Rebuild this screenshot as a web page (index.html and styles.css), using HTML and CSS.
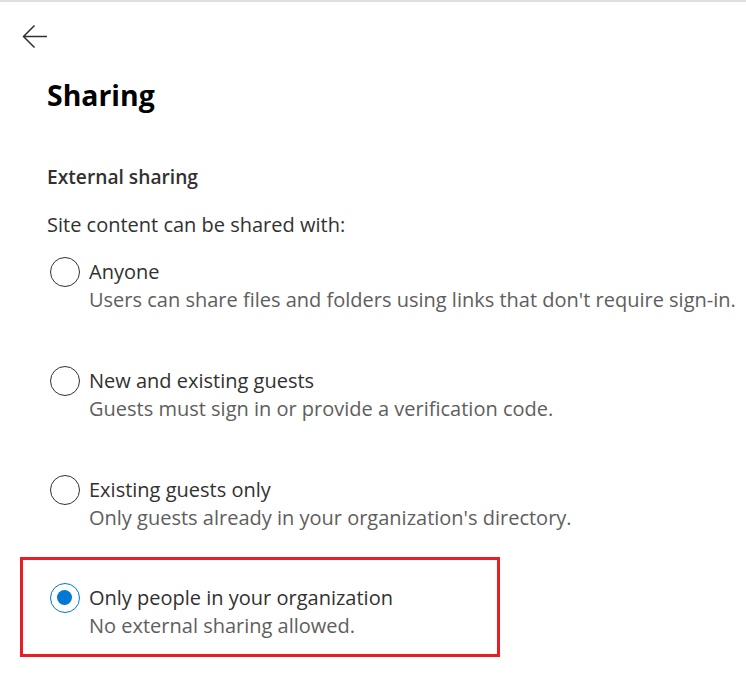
FILE: index.html
```html
<!DOCTYPE html>
<html>
<head>
<meta charset="utf-8">
<link rel="stylesheet" href="styles.css">
</head>
<body>
<div class="page">
  <button class="back" aria-label="Back">
    <svg width="26" height="26" viewBox="0 0 26 26"><path d="M25 12.5H1.5M12.5 1.5L1.5 12.5L12.5 23.5" fill="none" stroke="#323130" stroke-width="1.5"/></svg>
  </button>
  <div class="content">
    <h1 class="title">Sharing</h1>
    <h2 class="section">External sharing</h2>
    <p class="intro">Site content can be shared with:</p>
    <div class="options">
      <div class="option">
        <span class="radio"></span>
        <div class="text">
          <div class="label">Anyone</div>
          <div class="desc">Users can share files and folders using links that don't require sign-in.</div>
        </div>
      </div>
      <div class="option">
        <span class="radio"></span>
        <div class="text">
          <div class="label">New and existing guests</div>
          <div class="desc">Guests must sign in or provide a verification code.</div>
        </div>
      </div>
      <div class="option">
        <span class="radio"></span>
        <div class="text">
          <div class="label">Existing guests only</div>
          <div class="desc">Only guests already in your organization's directory.</div>
        </div>
      </div>
      <div class="highlight">
        <div class="option">
          <span class="radio checked"></span>
          <div class="text">
            <div class="label">Only people in your organization</div>
            <div class="desc">No external sharing allowed.</div>
          </div>
        </div>
      </div>
    </div>
  </div>
</div>
</body>
</html>
```
FILE: styles.css
```css
html, body {
  margin: 0;
  padding: 0;
  background: #fff;
}
body {
  font-family: "Open Sans", "Noto Sans", sans-serif;
  color: #323130;
  height: 680px;
  overflow: hidden;
}
.page {
  border-top: 2px solid #e1dfdd;
  padding-top: 22px;
}
.back {
  display: block;
  margin: 0 0 0 22px;
  padding: 0;
  border: 0;
  background: none;
  width: 26px;
  height: 26px;
}
.back svg { display: block; }
.content {
  padding-left: 47px;
}
.title {
  margin: 25px 0 0;
  font-size: 28.4px;
  line-height: 40px;
  font-weight: 700;
  color: #000;
}
.section {
  margin: 48px 0 0;
  font-size: 19.2px;
  line-height: 28px;
  font-weight: 600;
  color: #323130;
}
.intro {
  margin: 20px 0 0;
  font-size: 20px;
  line-height: 28px;
}
.options {
  margin-top: 19px;
  display: flex;
  flex-direction: column;
  gap: 53px;
}
.option {
  display: flex;
  gap: 9px;
  padding-left: 3px;
}
.radio {
  flex: none;
  width: 30px;
  height: 30px;
  box-sizing: border-box;
  border: 1.5px solid #323130;
  border-radius: 50%;
  margin-top: -1px;
  position: relative;
}
.radio.checked {
  border-color: #0078d4;
}
.radio.checked::after {
  content: "";
  position: absolute;
  left: 6px;
  top: 6px;
  width: 15px;
  height: 15px;
  border-radius: 50%;
  background: #0078d4;
}
.label {
  font-size: 20px;
  line-height: 28px;
  color: #323130;
}
.desc {
  font-size: 20px;
  line-height: 28px;
  color: #605e5c;
}
.highlight {
  margin-top: -28px;
  margin-left: -27px;
  width: 480px;
  box-sizing: border-box;
  border: 3px solid #ec1c24;
  padding: 24px 0 14px 24px;
}
```
